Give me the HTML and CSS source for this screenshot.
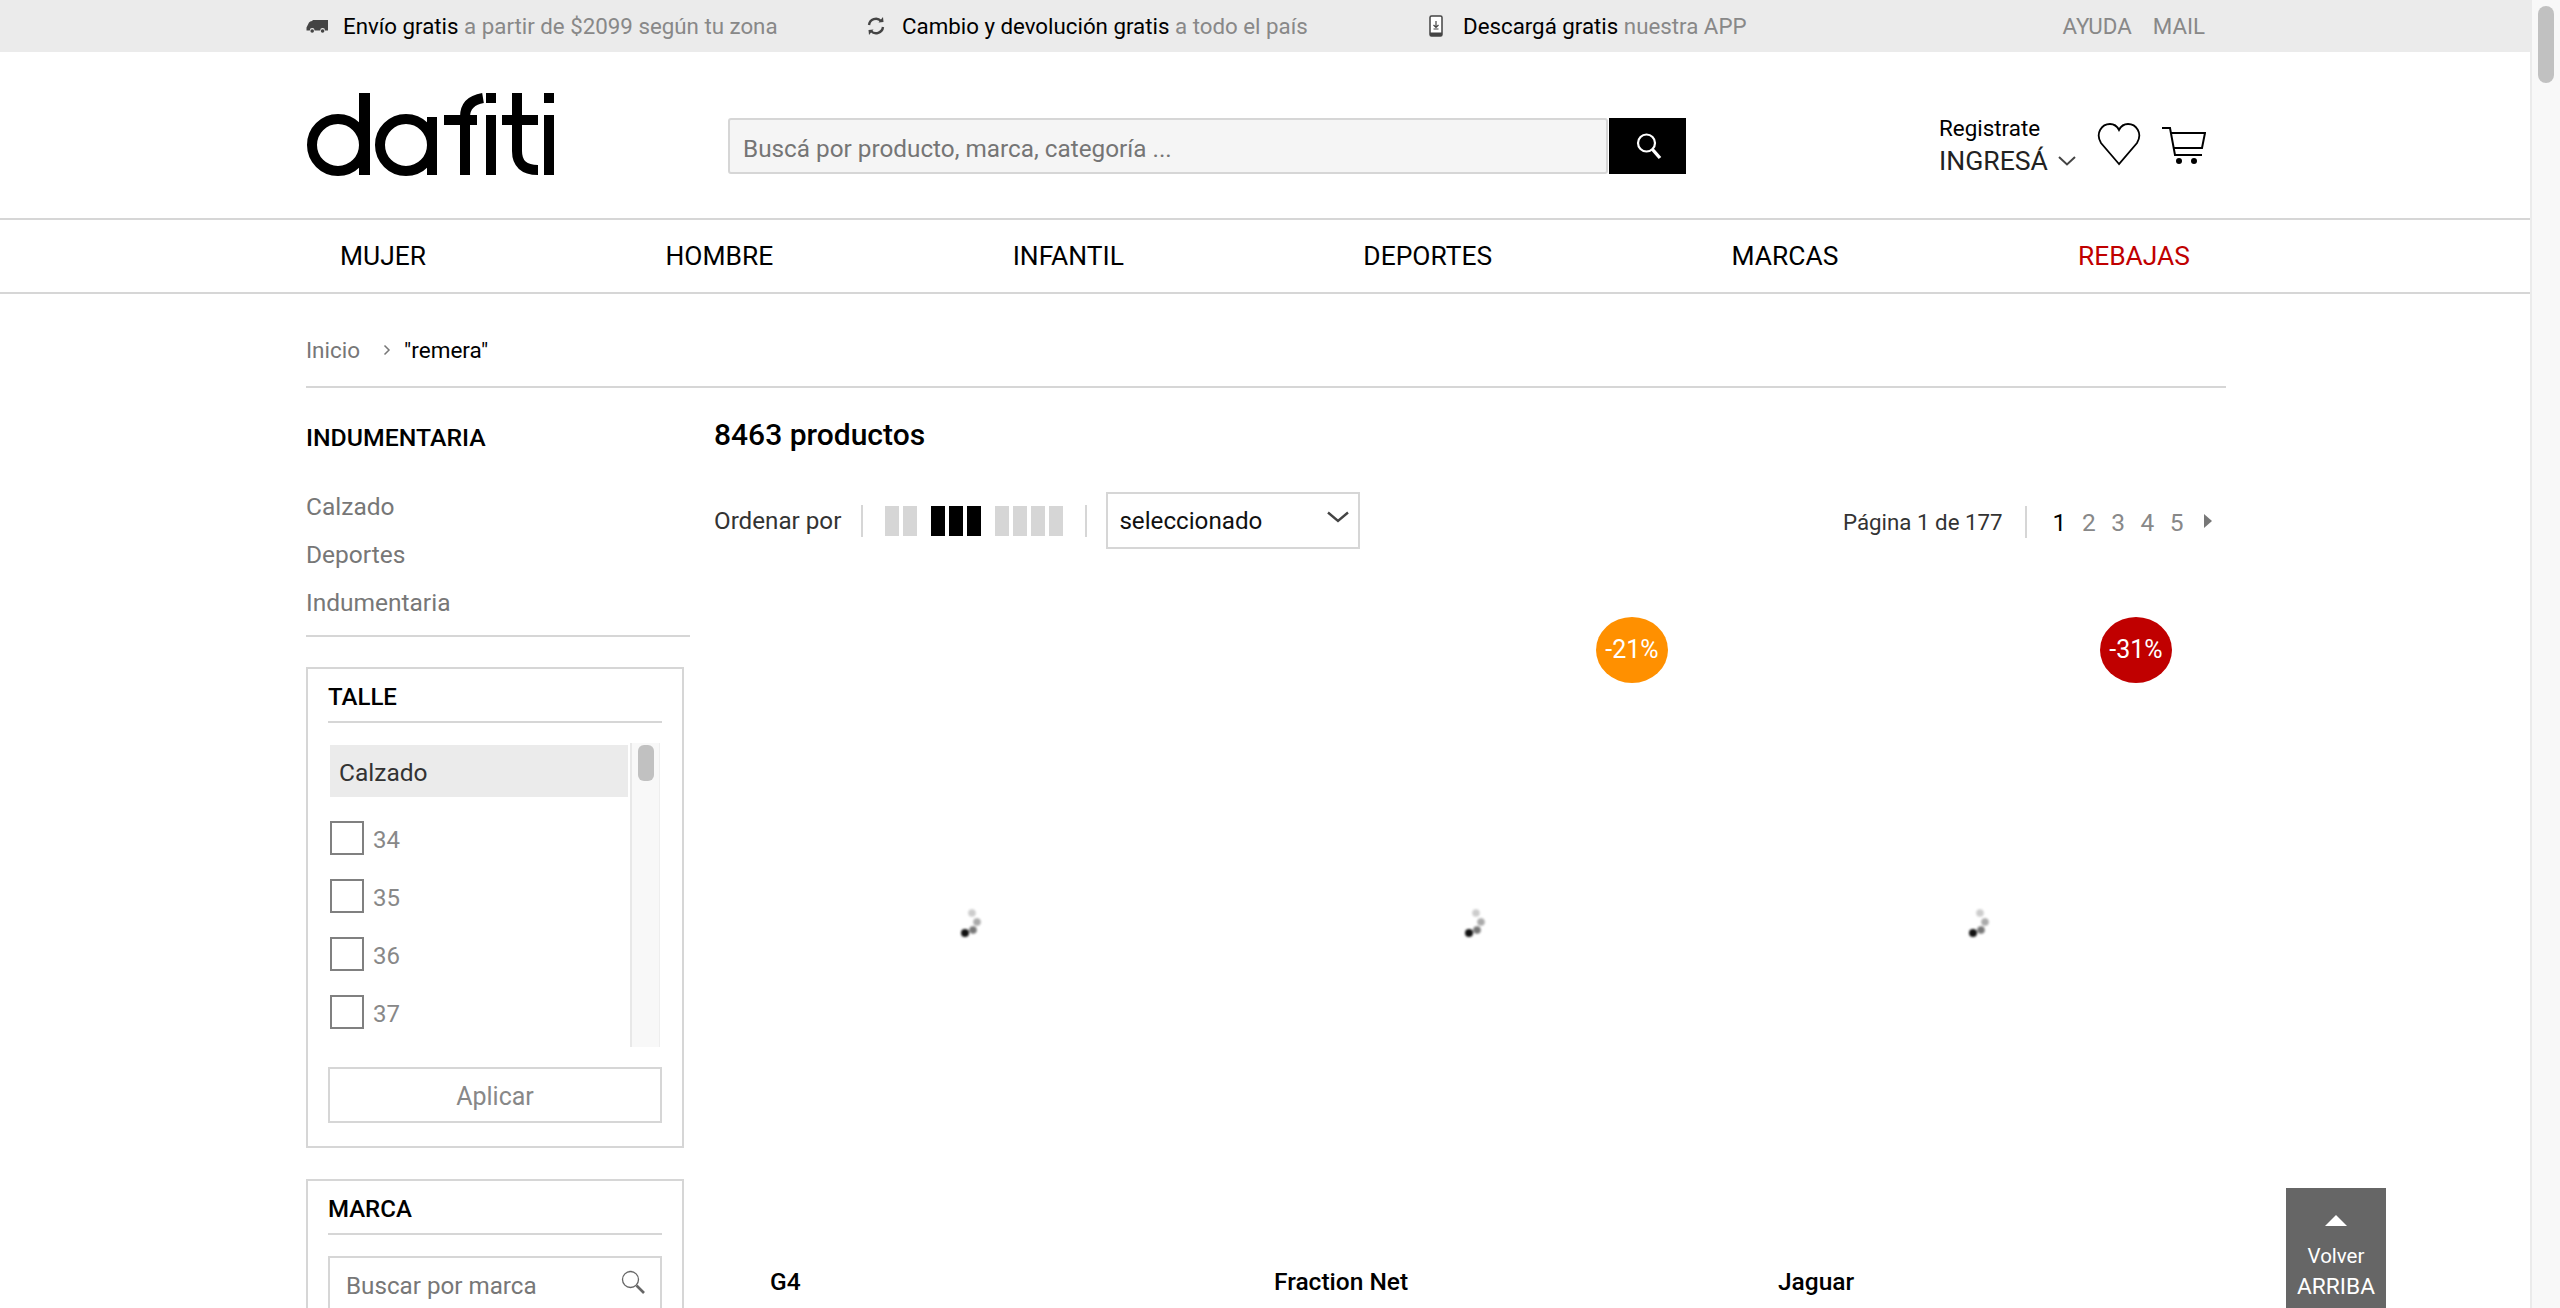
FILE: index.html
```html
<!DOCTYPE html>
<html lang="es">
<head>
  <meta charset="UTF-8" />
  <title>remera - Dafiti</title>
  <link rel="stylesheet" href="styles.css">
</head>
<body>
  <div class="topbar">
    <div class="topbar-in">
      <div class="promo promo-ship">
        <svg class="promo-icon" width="24" height="16" viewBox="0 0 24 16"><path fill="#444" d="M8 2h15v10.5H20a2.4 2.4 0 0 0-4.8 0H9.6a2.4 2.4 0 0 0-4.8 0H1.5V9.5L4 4.5Q5 3 7 3z"/><circle fill="#444" cx="7.2" cy="13" r="1.8"/><circle fill="#444" cx="17.6" cy="13" r="1.8"/></svg>
        <span><b>Envío gratis</b> a partir de $2099 según tu zona</span>
      </div>
      <div class="promo promo-change">
        <svg class="promo-icon" width="20" height="20" viewBox="0 0 20 20" fill="none" stroke="#444" stroke-width="2.4"><path d="M3 9a7 7 0 0 1 12-4"/><path d="M17 11a7 7 0 0 1-12 4"/><path fill="#444" stroke="none" d="M12.5 6.5l5-.5-.5-5zM7.5 13.5l-5 .5.5 5z"/></svg>
        <span><b>Cambio y devolución gratis</b> a todo el país</span>
      </div>
      <div class="promo promo-app">
        <svg class="promo-icon" width="14" height="22" viewBox="0 0 14 22"><rect x="1" y="1" width="12" height="20" rx="1.5" fill="#fff" stroke="#444" stroke-width="1.5"/><rect x="1" y="17.5" width="12" height="3.5" fill="#444"/><path d="M7 6v6M4.5 10L7 12.5 9.5 10M4.5 14h5" fill="none" stroke="#444" stroke-width="1.2"/></svg>
        <span><b>Descargá gratis</b> nuestra APP</span>
      </div>
      <div class="toplinks"><a>AYUDA</a><a>MAIL</a></div>
    </div>
  </div>

  <header class="head">
    <svg class="logo" width="250" height="84" viewBox="0 0 250 84" role="img" aria-label="dafiti">
      <g fill="none" stroke="#000" stroke-width="10">
        <circle cx="32" cy="52" r="26"/>
        <circle cx="100" cy="52" r="26"/>
        <path d="M159 82V24Q159 8 177 5"/>
        <path d="M211 0V58Q211 77 232 77"/>
      </g>
      <g fill="#000">
        <rect x="53" y="0" width="11" height="82"/>
        <rect x="121" y="24" width="10" height="58"/>
        <rect x="138" y="22" width="33" height="10"/>
        <rect x="180" y="0" width="10" height="10"/>
        <rect x="180" y="22" width="10" height="60"/>
        <rect x="196" y="22" width="36" height="10"/>
        <rect x="238" y="0" width="10" height="10"/>
        <rect x="238" y="22" width="10" height="60"/>
      </g>
    </svg>
    <form class="search">
      <div class="search-input">Buscá por producto, marca, categoría ...</div>
      <button type="button" class="search-btn">
        <svg width="30" height="30" viewBox="0 0 30 30" fill="none" stroke="#fff"><circle cx="12.5" cy="12" r="8.5" stroke-width="2.2"/><path d="M18.5 18.5L26 27" stroke-width="3.4"/></svg>
      </button>
    </form>
    <div class="account">
      <div class="login">
        <div class="register">Registrate</div>
        <div class="enter">INGRESÁ
          <svg width="18" height="10" viewBox="0 0 18 10" fill="none" stroke="#444" stroke-width="2"><path d="M1 1l8 7.5L17 1"/></svg>
        </div>
      </div>
      <svg class="heart" width="44" height="44" viewBox="0 0 44 44" fill="none" stroke="#000" stroke-width="1.8"><path d="M22 42L4 21C-2 11 5 2 13 2c4 0 7 2 9 6 2-4 5-6 9-6 8 0 15 9 9 19z"/></svg>
      <svg class="cart" width="44" height="38" viewBox="0 0 44 38" fill="none" stroke="#000" stroke-width="2"><path d="M0 1h8l5 27h27"/><path d="M9 6h34l-3 15H12"/><circle cx="17" cy="34" r="3" fill="#000" stroke="none"/><circle cx="32" cy="34" r="3" fill="#000" stroke="none"/></svg>
    </div>
  </header>

  <nav class="mainnav">
    <div class="mainnav-in">
      <a>MUJER</a><a>HOMBRE</a><a>INFANTIL</a><a>DEPORTES</a><a>MARCAS</a><a class="sale">REBAJAS</a>
    </div>
  </nav>

  <div class="page">
    <div class="crumbs">
      <a>Inicio</a>
      <svg width="8" height="12" viewBox="0 0 8 12" fill="none" stroke="#777" stroke-width="1.5"><path d="M1.5 1.5L6 6l-4.5 4.5"/></svg>
      <b>"remera"</b>
    </div>

    <div class="cols">
      <aside class="side">
        <h3 class="cat-title">INDUMENTARIA</h3>
        <ul class="cats">
          <li>Calzado</li>
          <li>Deportes</li>
          <li>Indumentaria</li>
        </ul>

        <section class="filter">
          <h4>TALLE</h4>
          <div class="sizes">
            <div class="size-list">
              <div class="size-group">Calzado</div>
              <label class="size"><i class="check"></i>34</label>
              <label class="size"><i class="check"></i>35</label>
              <label class="size"><i class="check"></i>36</label>
              <label class="size"><i class="check"></i>37</label>
            </div>
            <div class="size-scroll"><span></span></div>
          </div>
          <button type="button" class="apply">Aplicar</button>
        </section>

        <section class="filter filter-brand">
          <h4>MARCA</h4>
          <div class="brand-search">
            <span>Buscar por marca</span>
            <svg width="26" height="26" viewBox="0 0 26 26" fill="none" stroke="#666"><circle cx="10.5" cy="9.5" r="8" stroke-width="1.3"/><path d="M16.5 15.5L24 23" stroke-width="2.6"/></svg>
          </div>
        </section>
      </aside>

      <main class="results">
        <h2 class="count">8463 productos</h2>
        <div class="tools">
          <span class="sort">Ordenar por</span>
          <div class="views">
            <div class="view"><i></i><i></i></div>
            <div class="view on"><i></i><i></i><i></i></div>
            <div class="view"><i></i><i></i><i></i><i></i></div>
          </div>
          <div class="select">seleccionado
            <svg width="22" height="12" viewBox="0 0 22 12" fill="none" stroke="#444" stroke-width="2.4"><path d="M1 1.5L11 10l10-8.5"/></svg>
          </div>
          <div class="pager">
            <span class="pager-text">Página 1 de 177</span>
            <div class="pages">
              <a class="cur">1</a><a>2</a><a>3</a><a>4</a><a>5</a>
              <svg width="8" height="14" viewBox="0 0 8 14"><path fill="#777" d="M0 0l8 7-8 7z"/></svg>
            </div>
          </div>
        </div>

        <div class="grid">
          <article class="card">
            <div class="card-img"><svg class="spin" width="24" height="32" viewBox="0 0 24 32"><circle cx="13" cy="6" r="3.8" fill="#ccc"/><circle cx="18" cy="15" r="3.8" fill="#aaa"/><circle cx="14" cy="23" r="3.8" fill="#777"/><circle cx="6" cy="26" r="4" fill="#111"/></svg></div>
            <div class="card-brand">G4</div>
          </article>
          <article class="card">
            <span class="off off-orange">-21%</span>
            <div class="card-img"><svg class="spin" width="24" height="32" viewBox="0 0 24 32"><circle cx="13" cy="6" r="3.8" fill="#ccc"/><circle cx="18" cy="15" r="3.8" fill="#aaa"/><circle cx="14" cy="23" r="3.8" fill="#777"/><circle cx="6" cy="26" r="4" fill="#111"/></svg></div>
            <div class="card-brand">Fraction Net</div>
          </article>
          <article class="card">
            <span class="off off-red">-31%</span>
            <div class="card-img"><svg class="spin" width="24" height="32" viewBox="0 0 24 32"><circle cx="13" cy="6" r="3.8" fill="#ccc"/><circle cx="18" cy="15" r="3.8" fill="#aaa"/><circle cx="14" cy="23" r="3.8" fill="#777"/><circle cx="6" cy="26" r="4" fill="#111"/></svg></div>
            <div class="card-brand">Jaguar</div>
          </article>
        </div>
      </main>
    </div>
  </div>

  <a class="totop">
    <svg width="22" height="11" viewBox="0 0 22 11"><path fill="#fff" d="M11 0l11 11H0z"/></svg>
    <span class="totop-small">Volver</span>
    <span>ARRIBA</span>
  </a>
  <div class="scrollbar"><span></span></div>
</body>
</html>
```

FILE: styles.css
```css
* {
  box-sizing: border-box;
}

html, body {
  height: 100%;
  overflow: hidden;
}

body {
  margin: 0 30px 0 0;
  font-family: Roboto, "Liberation Sans", sans-serif;
  font-size: 24px;
  color: #000;
  background: #fff;
}

h2, h3, h4, ul {
  margin: 0;
  padding: 0;
  font-weight: 400;
}

ul {
  list-style: none;
}

/* top strip */
.topbar {
  height: 52px;
  background: #ebebeb;
}

.topbar-in {
  display: flex;
  align-items: center;
  height: 52px;
  margin-left: 305px;
  width: 1900px;
  font-size: 22.3px;
  color: #888;
}

.topbar-in b {
  font-weight: 400;
  color: #000;
}

.promo {
  display: flex;
  align-items: center;
}

.promo-ship {
  width: 560px;
}

.promo-ship .promo-icon {
  margin-right: 14px;
}

.promo-change {
  width: 562px;
}

.promo-change .promo-icon {
  margin: 0 16px 0 1px;
}

.promo-app .promo-icon {
  margin: 0 20px 0 2px;
}

.toplinks {
  display: flex;
  gap: 21px;
  margin-left: auto;
}

/* logo, search, account */
.head {
  display: flex;
  align-items: flex-start;
  height: 166px;
  padding-left: 306px;
}

.logo {
  margin-top: 41px;
}

.search {
  display: flex;
  width: 958px;
  height: 56px;
  margin: 66px 0 0 172px;
}

.search-input {
  flex: 1;
  padding: 3px 13px 0;
  line-height: 51px;
  font-size: 24.3px;
  color: #757575;
  background: #f5f5f5;
  border: 2px solid #d6d6d6;
  border-radius: 3px;
}

.search-btn {
  display: flex;
  align-items: center;
  justify-content: center;
  width: 77px;
  margin-left: 1px;
  padding: 0 0 0 2px;
  background: #000;
  border: none;
}

.account {
  display: flex;
  margin-left: 253px;
}

.login {
  width: 158px;
  margin-top: 61px;
}

.register {
  font-size: 22.4px;
  line-height: 30px;
}

.enter {
  display: flex;
  align-items: center;
  gap: 10px;
  font-size: 26.6px;
  line-height: 36px;
  color: #222;
}

.heart {
  margin-top: 70px;
}

.cart {
  margin: 75px 0 0 21px;
}

/* main nav */
.mainnav {
  height: 76px;
  border-top: 2px solid #d6d6d6;
  border-bottom: 2px solid #d6d6d6;
}

.mainnav-in {
  display: flex;
  align-items: center;
  justify-content: space-between;
  height: 72px;
  margin-left: 340px;
  width: 1850px;
  font-size: 26.4px;
}

.sale {
  color: #c00000;
}

/* page */
.page {
  margin-left: 306px;
  width: 1920px;
}

.crumbs {
  display: flex;
  align-items: center;
  height: 94px;
  padding-top: 20px;
  font-size: 22.5px;
  color: #777;
  border-bottom: 2px solid #d6d6d6;
}

.crumbs svg {
  margin: 0 13px 0 23px;
}

.crumbs b {
  font-weight: 400;
  color: #000;
}

.cols {
  display: flex;
}

.side {
  width: 384px;
  flex-shrink: 0;
}

.cat-title {
  padding-top: 35px;
  font-size: 24.8px;
  line-height: 30px;
  font-weight: 500;
}

.cats {
  margin-top: 30px;
  padding-bottom: 8px;
  border-bottom: 2px solid #d6d6d6;
  font-size: 24.5px;
  color: #777;
}

.cats li {
  height: 48px;
  line-height: 48px;
}

.filter {
  width: 378px;
  margin-top: 30px;
  padding: 0 20px;
  border: 2px solid #d6d6d6;
}

.filter + .filter {
  margin-top: 31px;
}

.filter h4 {
  height: 54px;
  padding-top: 13px;
  font-size: 24px;
  line-height: 30px;
  font-weight: 500;
  border-bottom: 2px solid #d6d6d6;
}

.sizes {
  display: flex;
  width: 332px;
  height: 304px;
  margin: 20px 0;
}

.size-list {
  flex: 1;
  padding: 2px 0 0 2px;
}

.size-group {
  width: 298px;
  height: 52px;
  padding: 3px 0 0 9px;
  line-height: 49px;
  font-size: 24.5px;
  color: #333;
  background: #ebebeb;
}

.size {
  display: flex;
  align-items: center;
  height: 58px;
  padding-top: 3px;
  font-size: 24px;
  color: #888;
}

.size:first-of-type {
  margin-top: 12px;
}

.check {
  flex-shrink: 0;
  width: 34px;
  height: 34px;
  margin: -3px 9px 0 0;
  border: 2px solid #808080;
}

.size-scroll {
  flex-shrink: 0;
  width: 30px;
  padding: 2px 5px 0 6px;
  background: #f8f8f8;
  border-left: 2px solid #e8e8e8;
  border-right: 1px solid #eee;
}

.size-scroll span {
  display: block;
  width: 16px;
  height: 36px;
  background: #c1c1c1;
  border-radius: 6px;
}

.apply {
  display: block;
  width: 334px;
  height: 56px;
  margin-bottom: 23px;
  padding: 2px 0 0;
  font-family: inherit;
  font-size: 25px;
  color: #888;
  background: #fff;
  border: 2px solid #d6d6d6;
}

.brand-search {
  display: flex;
  align-items: center;
  justify-content: space-between;
  width: 334px;
  height: 56px;
  margin: 21px 0;
  padding: 3px 14px 0 16px;
  font-size: 24.2px;
  color: #777;
  border: 2px solid #d6d6d6;
}

.brand-search svg {
  margin-top: -5px;
}

.filter-brand {
  height: 200px;
}

/* results column */
.results {
  flex: 1;
  margin-left: 24px;
}

.count {
  padding-top: 28px;
  font-size: 30px;
  line-height: 38px;
  font-weight: 500;
}

.tools {
  display: flex;
  align-items: center;
  height: 57px;
  margin-top: 38px;
  font-size: 24.2px;
  color: #333;
}

.sort {
  padding: 1px 20px 0 0;
}

.views {
  display: flex;
  align-items: center;
  gap: 14px;
  height: 32px;
  padding: 0 22px;
  border-left: 2px solid #d6d6d6;
  border-right: 2px solid #d6d6d6;
}

.view {
  display: flex;
  gap: 4px;
}

.view i {
  width: 14px;
  height: 30px;
  background: #d6d6d6;
}

.view.on i {
  background: #000;
}

.select {
  display: flex;
  align-items: center;
  justify-content: space-between;
  width: 254px;
  height: 57px;
  margin-left: 19px;
  padding: 0 9px 0 11px;
  color: #111;
  border: 2px solid #d6d6d6;
}

.select svg {
  margin-top: -8px;
}

.pager {
  display: flex;
  align-items: center;
  margin-left: auto;
  margin-top: 3px;
  padding-right: 14px;
  font-size: 22.3px;
}

.pager-text {
  padding-right: 22px;
  line-height: 32px;
  border-right: 2px solid #d6d6d6;
}

.pages {
  display: flex;
  align-items: center;
  gap: 15.5px;
  padding-left: 26px;
  font-size: 24.5px;
  color: #888;
}

.pages .cur {
  color: #000;
}

.pages svg {
  margin: -3px 0 0 5px;
}

.grid {
  display: flex;
  margin-top: 31px;
}

.card {
  position: relative;
  width: 504px;
}

.card-img {
  display: flex;
  align-items: center;
  justify-content: center;
  height: 686px;
  padding-left: 10px;
}

.spin {
  filter: blur(0.8px);
}

.card-brand {
  padding-left: 56px;
  font-size: 24.5px;
  line-height: 32px;
  font-weight: 500;
}

.off {
  position: absolute;
  top: 37px;
  right: 54px;
  width: 72px;
  height: 66px;
  line-height: 66px;
  text-align: center;
  font-size: 25px;
  color: #fff;
  border-radius: 50%;
}

.off-orange {
  background: #ff9000;
}

.off-red {
  background: #c00000;
}

/* fixed bits */
.totop {
  position: fixed;
  left: 2286px;
  top: 1188px;
  display: flex;
  flex-direction: column;
  align-items: center;
  width: 100px;
  height: 120px;
  padding-top: 27px;
  font-size: 22.7px;
  line-height: 32px;
  color: #fff;
  background: #666;
}

.totop-small {
  margin-top: 15px;
  font-size: 20.5px;
  line-height: 30px;
}

.scrollbar {
  position: fixed;
  top: 0;
  right: 0;
  width: 30px;
  height: 100%;
  padding: 6px 6px 0;
  background: #f8f8f8;
  border-left: 2px solid #ebebeb;
}

.scrollbar span {
  display: block;
  width: 16px;
  height: 77px;
  background: #c1c1c1;
  border-radius: 8px;
}
```
